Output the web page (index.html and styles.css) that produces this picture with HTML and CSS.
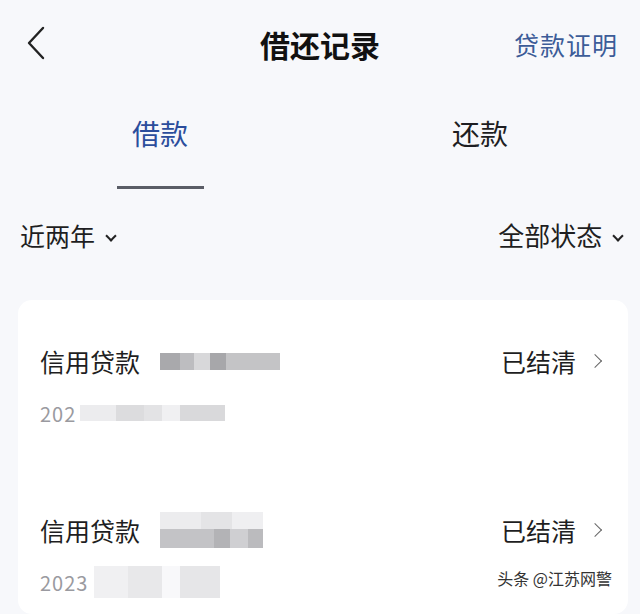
FILE: index.html
```html
<!DOCTYPE html>
<html lang="zh-CN">
<head>
    <meta charset="UTF-8">
    <meta name="viewport" content="width=device-width, initial-scale=1.0">
    <title>借还记录</title>
    <link rel="stylesheet" href="styles.css">
</head>
<body>
    <div id="heading">
        <svg class="back" viewBox="0 0 20 34" width="20" height="34">
            <path d="M17 2 L3 17 L17 32" fill="none" stroke="#222" stroke-width="2.4" stroke-linecap="round" stroke-linejoin="round"/>
        </svg>
        <p id="title">借还记录</p>
        <a href="#" id="proof">贷款证明</a>
    </div>

    <div class="tabs">
        <div class="tab active">借款</div>
        <div class="tab">还款</div>
    </div>

    <div class="filters">
        <div class="filter">近两年 <span class="caret"></span></div>
        <div class="filter">全部状态 <span class="caret"></span></div>
    </div>

    <div class="card">
        <div class="record">
            <div class="row">
                <div class="name">信用贷款
                    <span class="mask mask1">
                        <i style="background:#a9a9ac;width:20px"></i><i style="background:#bdbdc0;width:14px"></i><i style="background:#d8d8da;width:16px"></i><i style="background:#a7a7aa;width:16px"></i><i style="background:#c4c4c6;width:54px"></i>
                    </span>
                </div>
                <div class="status">已结清 <span class="arrow"></span></div>
            </div>
            <div class="date">202<span class="mask mask2">
                <i style="background:#ececee;width:36px"></i><i style="background:#dcdcde;width:28px"></i><i style="background:#e3e3e5;width:18px"></i><i style="background:#f0f0f2;width:18px"></i><i style="background:#d9d9db;width:45px"></i></span></div>
        </div>
        <div class="record">
            <div class="row">
                <div class="name">信用贷款
                    <span class="mask mask3">
                        <i class="top"></i><i class="bottom"></i>
                    </span>
                </div>
                <div class="status">已结清 <span class="arrow"></span></div>
            </div>
            <div class="date">2023<span class="mask mask4">
                <i style="background:#f0f0f2;width:34px"></i><i style="background:#e8e8ea;width:34px"></i><i style="background:#f8f8fa;width:18px"></i><i style="background:#e6e6e8;width:40px"></i></span></div>
        </div>
        <div class="watermark">头条 @江苏网警</div>
    </div>
</body>
</html>
```

FILE: styles.css
```css
body {
    margin: 0;
    background-color: #f7f8fb;
    font-family: "Noto Sans CJK SC", "Noto Sans", sans-serif;
    color: #1e1e22;
    height: 614px;
    overflow: hidden;
}

#heading {
    height: 88px;
    display: flex;
    align-items: center;
    justify-content: space-between;
    padding: 0 22px 0 26px;
    position: relative;
}

.back {
    margin-top: -2px;
}

#title {
    margin: 0;
    position: absolute;
    left: 0;
    right: 0;
    text-align: center;
    font-size: 30px;
    font-weight: bold;
    color: #111;
    pointer-events: none;
}

#proof {
    text-decoration: none;
    color: #3c5c98;
    font-size: 25px;
    letter-spacing: 1px;
}

.tabs {
    display: flex;
    height: 104px;
}

.tab {
    flex: 1;
    text-align: center;
    font-size: 28px;
    padding-top: 25px;
    position: relative;
}

.tab.active {
    color: #2b4d9c;
}

.tab.active::after {
    content: "";
    position: absolute;
    left: 50%;
    margin-left: -43px;
    top: 98px;
    width: 87px;
    height: 3px;
    background: #5a5d66;
}

.filters {
    display: flex;
    justify-content: space-between;
    padding: 0 18px 0 20px;
    height: 92px;
    font-size: 25px;
    line-height: 86px;
}

.filter:last-child {
    font-size: 26px;
}

.caret {
    display: inline-block;
    width: 6px;
    height: 6px;
    border-right: 2px solid #222;
    border-bottom: 2px solid #222;
    transform: rotate(45deg);
    margin: 0 0 6px 6px;
    vertical-align: middle;
}

.card {
    margin: 16px 12px 0 18px;
    background: #fff;
    border-radius: 14px;
    height: 314px;
    box-sizing: border-box;
    position: relative;
    padding: 36px 22px 0;
}

.record {
    height: 169px;
}

.row {
    display: flex;
    justify-content: space-between;
    align-items: center;
    height: 50px;
}

.name, .status {
    font-size: 25px;
    display: flex;
    align-items: center;
}

.status {
    margin-right: 6px;
}

.arrow {
    display: inline-block;
    width: 9px;
    height: 9px;
    border-right: 1.5px solid #666;
    border-top: 1.5px solid #666;
    transform: rotate(45deg);
    margin-left: 14px;
}

.mask {
    display: inline-flex;
}

.mask i {
    display: block;
}

.mask1 {
    margin-left: 20px;
    height: 17px;
}

.mask3 {
    margin-left: 20px;
    width: 103px;
    height: 36px;
    flex-direction: column;
}

.mask3 .top {
    height: 17px;
    background: linear-gradient(90deg, #ececee 0 40%, #e4e4e6 40% 70%, #efeff1 70%);
}

.mask3 .bottom {
    height: 19px;
    background: linear-gradient(90deg, #c3c3c6 0 52%, #b3b3b6 52% 68%, #cfcfd2 68% 85%, #bbbbbe 85%);
}

.date {
    display: flex;
    align-items: center;
    font-size: 20px;
    color: #9a9aa0;
    letter-spacing: 1px;
    margin-top: 12px;
    height: 30px;
}

.mask2 {
    height: 16px;
    margin-left: 4px;
}

.mask4 {
    height: 32px;
    margin-left: 6px;
}

.watermark {
    position: absolute;
    right: 16px;
    bottom: 24px;
    font-size: 16px;
    color: #333;
}
```
